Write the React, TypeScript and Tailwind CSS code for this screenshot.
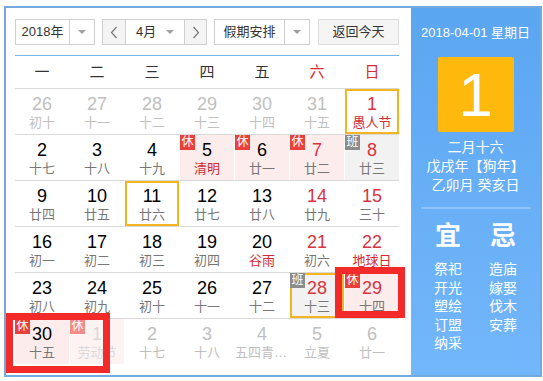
import clsx from 'clsx';

type Day = {
    d: number;
    l: string;
    other?: boolean;
    lred?: boolean;
    badge?: '休' | '班';
    sel?: 'today' | 'hover';
};

const weeks: Day[][] = [
    [
        { d: 26, l: '初十', other: true },
        { d: 27, l: '十一', other: true },
        { d: 28, l: '十二', other: true },
        { d: 29, l: '十三', other: true },
        { d: 30, l: '十四', other: true },
        { d: 31, l: '十五', other: true },
        { d: 1, l: '愚人节', lred: true, sel: 'today' },
    ],
    [
        { d: 2, l: '十七' },
        { d: 3, l: '十八' },
        { d: 4, l: '十九' },
        { d: 5, l: '清明', lred: true, badge: '休' },
        { d: 6, l: '廿一', badge: '休' },
        { d: 7, l: '廿二', badge: '休' },
        { d: 8, l: '廿三', badge: '班' },
    ],
    [
        { d: 9, l: '廿四' },
        { d: 10, l: '廿五' },
        { d: 11, l: '廿六', sel: 'hover' },
        { d: 12, l: '廿七' },
        { d: 13, l: '廿八' },
        { d: 14, l: '廿九' },
        { d: 15, l: '三十' },
    ],
    [
        { d: 16, l: '初一' },
        { d: 17, l: '初二' },
        { d: 18, l: '初三' },
        { d: 19, l: '初四' },
        { d: 20, l: '谷雨', lred: true },
        { d: 21, l: '初六' },
        { d: 22, l: '地球日', lred: true },
    ],
    [
        { d: 23, l: '初八' },
        { d: 24, l: '初九' },
        { d: 25, l: '初十' },
        { d: 26, l: '十一' },
        { d: 27, l: '十二' },
        { d: 28, l: '十三', badge: '班', sel: 'hover' },
        { d: 29, l: '十四', badge: '休' },
    ],
    [
        { d: 30, l: '十五', badge: '休' },
        { d: 1, l: '劳动节', other: true, badge: '休' },
        { d: 2, l: '十七', other: true },
        { d: 3, l: '十八', other: true },
        { d: 4, l: '五四青年节', other: true },
        { d: 5, l: '立夏', other: true },
        { d: 6, l: '廿一', other: true },
    ],
];

const weekdays = ['一', '二', '三', '四', '五', '六', '日'];

function Caret() {
    return <span className="w-0 h-0 border-x-[4px] border-x-transparent border-t-[4px] border-t-[#a0a0a0]" />;
}

function Chevron({ dir }: { dir: 'l' | 'r' }) {
    return (
        <svg width="8" height="13" viewBox="0 0 8 13" fill="none" stroke="#777" strokeWidth="1.2">
            {dir === 'l' ? <polyline points="6.5,1 1.5,6.5 6.5,12" /> : <polyline points="1.5,1 6.5,6.5 1.5,12" />}
        </svg>
    );
}

function Cell({ day, col }: { day: Day; col: number }) {
    const weekend = col >= 5;
    const bg = day.badge === '休' ? 'bg-[#fdecec]' : day.badge === '班' ? 'bg-[#f2f2f2]' : 'bg-white';
    const numColor = day.other ? 'text-[#c0c0c0]' : weekend || day.sel === 'today' ? 'text-[#d9333f]' : 'text-black';
    const lunarColor = day.other ? 'text-[#c0c0c0]' : day.lred || day.sel === 'today' ? 'text-[#d22b35]' : 'text-[#777]';
    return (
        <div
            className={clsx(
                'relative flex flex-col items-center h-[45px] border-2',
                bg,
                day.other && day.badge && 'opacity-60',
                day.sel ? 'border-[#f5b521]' : 'border-transparent'
            )}
        >
            {day.badge && (
                <span
                    className={clsx(
                        'absolute -left-[2px] -top-[2px] w-[15px] h-[15px] text-[12px] leading-[15px] text-center text-white',
                        day.badge === '休' ? 'bg-[#e8413c]' : 'bg-[#8c8c8c]'
                    )}
                >
                    {day.badge}
                </span>
            )}
            <span className={clsx('mt-[3px] text-[18px] leading-[20px]', numColor)}>{day.d}</span>
            <span
                className={clsx(
                    'mt-px w-[54px] shrink-0 text-center truncate text-[13px] leading-[16px]',
                    lunarColor
                )}
            >
                {day.l}
            </span>
        </div>
    );
}

export default function App() {
    return (
        <div
            className="relative w-[543px] h-[381px] bg-white overflow-hidden"
            style={{ fontFamily: '"Liberation Sans", "Noto Sans CJK SC", sans-serif' }}
        >
            <div className="absolute left-[4px] top-[6px] w-[538px] h-[371px] border-2 border-[#72a9de] flex">
                {/* calendar */}
                <div className="w-[405px] pl-[9px] pr-[12px] pt-[11px]">
                    <div className="flex items-center h-[26px] text-[13px] text-[#333]">
                        <div className="flex w-[80px] h-full border border-[#cfcfcf]">
                            <span className="flex-1 flex items-center justify-center">2018年</span>
                            <span className="w-[25px] flex items-center justify-center border-l border-[#cfcfcf]">
                                <Caret />
                            </span>
                        </div>
                        <div className="flex w-[105px] h-full ml-[7px] border border-[#cfcfcf]">
                            <span className="w-[23px] flex items-center justify-center bg-[#f4f4f4] border-r border-[#cfcfcf]">
                                <Chevron dir="l" />
                            </span>
                            <span className="flex-1 flex items-center justify-between pl-[10px] pr-[10px]">
                                4月
                                <Caret />
                            </span>
                            <span className="w-[22px] flex items-center justify-center bg-[#f4f4f4] border-l border-[#cfcfcf]">
                                <Chevron dir="r" />
                            </span>
                        </div>
                        <div className="flex w-[96px] h-full ml-[7px] border border-[#cfcfcf]">
                            <span className="flex-1 flex items-center justify-center">假期安排</span>
                            <span className="w-[25px] flex items-center justify-center border-l border-[#cfcfcf]">
                                <Caret />
                            </span>
                        </div>
                        <button className="w-[81px] h-full ml-[8px] border border-[#dcdcdc] bg-[#f5f5f5] text-[13px] text-[#333]">
                            返回今天
                        </button>
                    </div>

                    <div className="mt-[10px] border-t border-[#7db4e6]" />
                    <div className="grid grid-cols-7 gap-x-px h-[33px] border-b border-[#d9d9d9] text-[15px]">
                        {weekdays.map((w, i) => (
                            <span
                                key={w}
                                className={clsx('flex items-center justify-center', i >= 5 ? 'text-[#d22b35]' : 'text-[#333]')}
                            >
                                {w}
                            </span>
                        ))}
                    </div>

                    {weeks.map((week, r) => (
                        <div key={r} className={clsx('grid grid-cols-7 gap-x-px', r < 5 && 'border-b border-[#d9d9d9]')}>
                            {week.map((day, c) => (
                                <Cell key={c} day={day} col={c} />
                            ))}
                        </div>
                    ))}
                </div>

                {/* side panel */}
                <div className="w-[129px] h-full bg-linear-to-b from-[#5ba6f1] to-[#73b7fb] text-white flex flex-col items-center">
                    <div className="mt-[17px] text-[13px] leading-[16px]">2018-04-01 星期日</div>
                    <div className="mt-[16px] w-[76px] h-[75px] rounded-[2px] bg-[#ffb80c] flex items-center justify-center text-[62px] leading-none">
                        1
                    </div>
                    <div className="mt-[6px] text-[14px] leading-[19px] text-center">
                        <div>二月十六</div>
                        <div>戊戌年【狗年】</div>
                        <div>乙卯月 癸亥日</div>
                    </div>
                    <div className="mt-[12px] w-[110px] border-t-2 border-[#8fc5f8]" />
                    <div className="mt-[12px] w-[110px] grid grid-cols-2 text-center">
                        <div className="flex flex-col items-center">
                            <span className="text-[26px] leading-[30px] font-bold">宜</span>
                            <div className="mt-[9px] text-[14px] leading-[18.5px]">
                                <div>祭祀</div>
                                <div>开光</div>
                                <div>塑绘</div>
                                <div>订盟</div>
                                <div>纳采</div>
                            </div>
                        </div>
                        <div className="flex flex-col items-center">
                            <span className="text-[26px] leading-[30px] font-bold">忌</span>
                            <div className="mt-[9px] text-[14px] leading-[18.5px]">
                                <div>造庙</div>
                                <div>嫁娶</div>
                                <div>伐木</div>
                                <div>安葬</div>
                            </div>
                        </div>
                    </div>
                </div>
            </div>

            {/* annotation boxes */}
            <div className="absolute left-[335px] top-[267px] w-[70px] h-[51px] border-[7px] border-[#f22a2a]" />
            <div className="absolute left-[6px] top-[313px] w-[104px] h-[60px] border-[7px] border-[#f22a2a]" />
        </div>
    );
}
